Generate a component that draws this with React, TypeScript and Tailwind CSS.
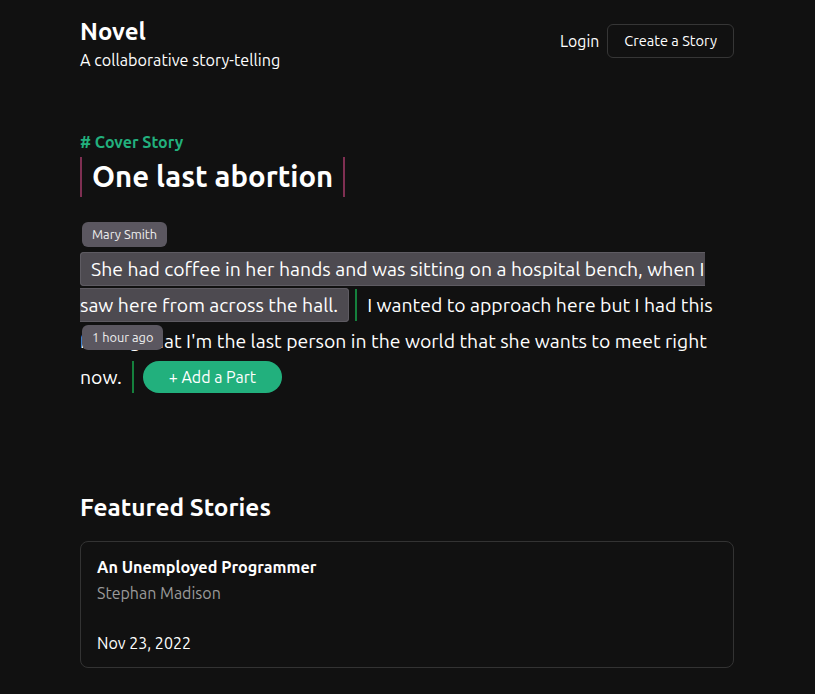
import React from "react";

export default function App() {
  return (
    <div
      className="min-h-screen bg-[#111111] text-white"
      style={{ fontFamily: "Ubuntu, Lato, 'Noto Sans', sans-serif" }}
    >
      <div className="mx-auto w-[655px] pr-px pt-4 pb-10">
        <header className="flex items-start justify-between">
          <div>
            <h1 className="text-2xl font-bold leading-8">Novel</h1>
            <p className="text-[16.2px] leading-6">A collaborative story-telling</p>
          </div>
          <div className="mt-2 flex items-center gap-2">
            <a className="text-[15.8px] leading-6">Login</a>
            <button className="rounded-md border border-[#363636] px-4 py-1.5 text-[14.6px] leading-5">
              Create a Story
            </button>
          </div>
        </header>

        <section className="mt-[58px]">
          <p className="text-base font-bold leading-6 text-[#22b07d]"># Cover Story</p>
          <h2 className="mt-[3px] inline-block border-x-2 border-[#7f2f52] px-[10px] text-[29.3px] font-bold leading-[40px]">
            One last abortion
          </h2>

          <div className="relative mt-[54px]">
            <span className="absolute left-[2px] top-[-29px] rounded-md bg-[#5b5760] px-[10px] text-[12.8px] leading-[25px] text-[#eeeeee]">
              Mary Smith
            </span>
            <p className="text-[19.4px] leading-9">
              <span className="rounded border border-[#5e5b62] bg-[#4d4a50] px-[10px] py-[5px]">
                She had coffee in her hands and was sitting on a hospital bench, when I saw here from across the hall.
              </span>
              <span className="ml-[6px] border-x-2 border-[#15803d] pl-[10px] pr-[10px] py-[5px]">
                I wanted to approach here but I had this feeling that I'm the last person in the world that she wants to meet right now.
              </span>
              <button className="relative top-[-1px] ml-[9px] inline-block rounded-full bg-[#22b07d] px-[26px] align-baseline text-base leading-8">
                + Add a Part
              </button>
            </p>
            <span className="absolute left-[2px] top-[74px] rounded-md bg-[#5b5760] px-[10px] text-[12.8px] leading-[25px] text-[#eeeeee]">
              1 hour ago
            </span>
          </div>
        </section>

        <section className="mt-[96px]">
          <h2 className="text-[24.4px] font-bold leading-8">Featured Stories</h2>
          <div className="mt-[18px] rounded-lg border border-[#333333] px-4 pt-[13px] pb-[12px]">
            <h3 className="text-[16.2px] font-bold leading-6">An Unemployed Programmer</h3>
            <p className="mt-[2px] text-base leading-6 text-[#9a9a9a]">Stephan Madison</p>
            <p className="mt-[26px] text-base leading-6">Nov 23, 2022</p>
          </div>
        </section>
      </div>
    </div>
  );
}
